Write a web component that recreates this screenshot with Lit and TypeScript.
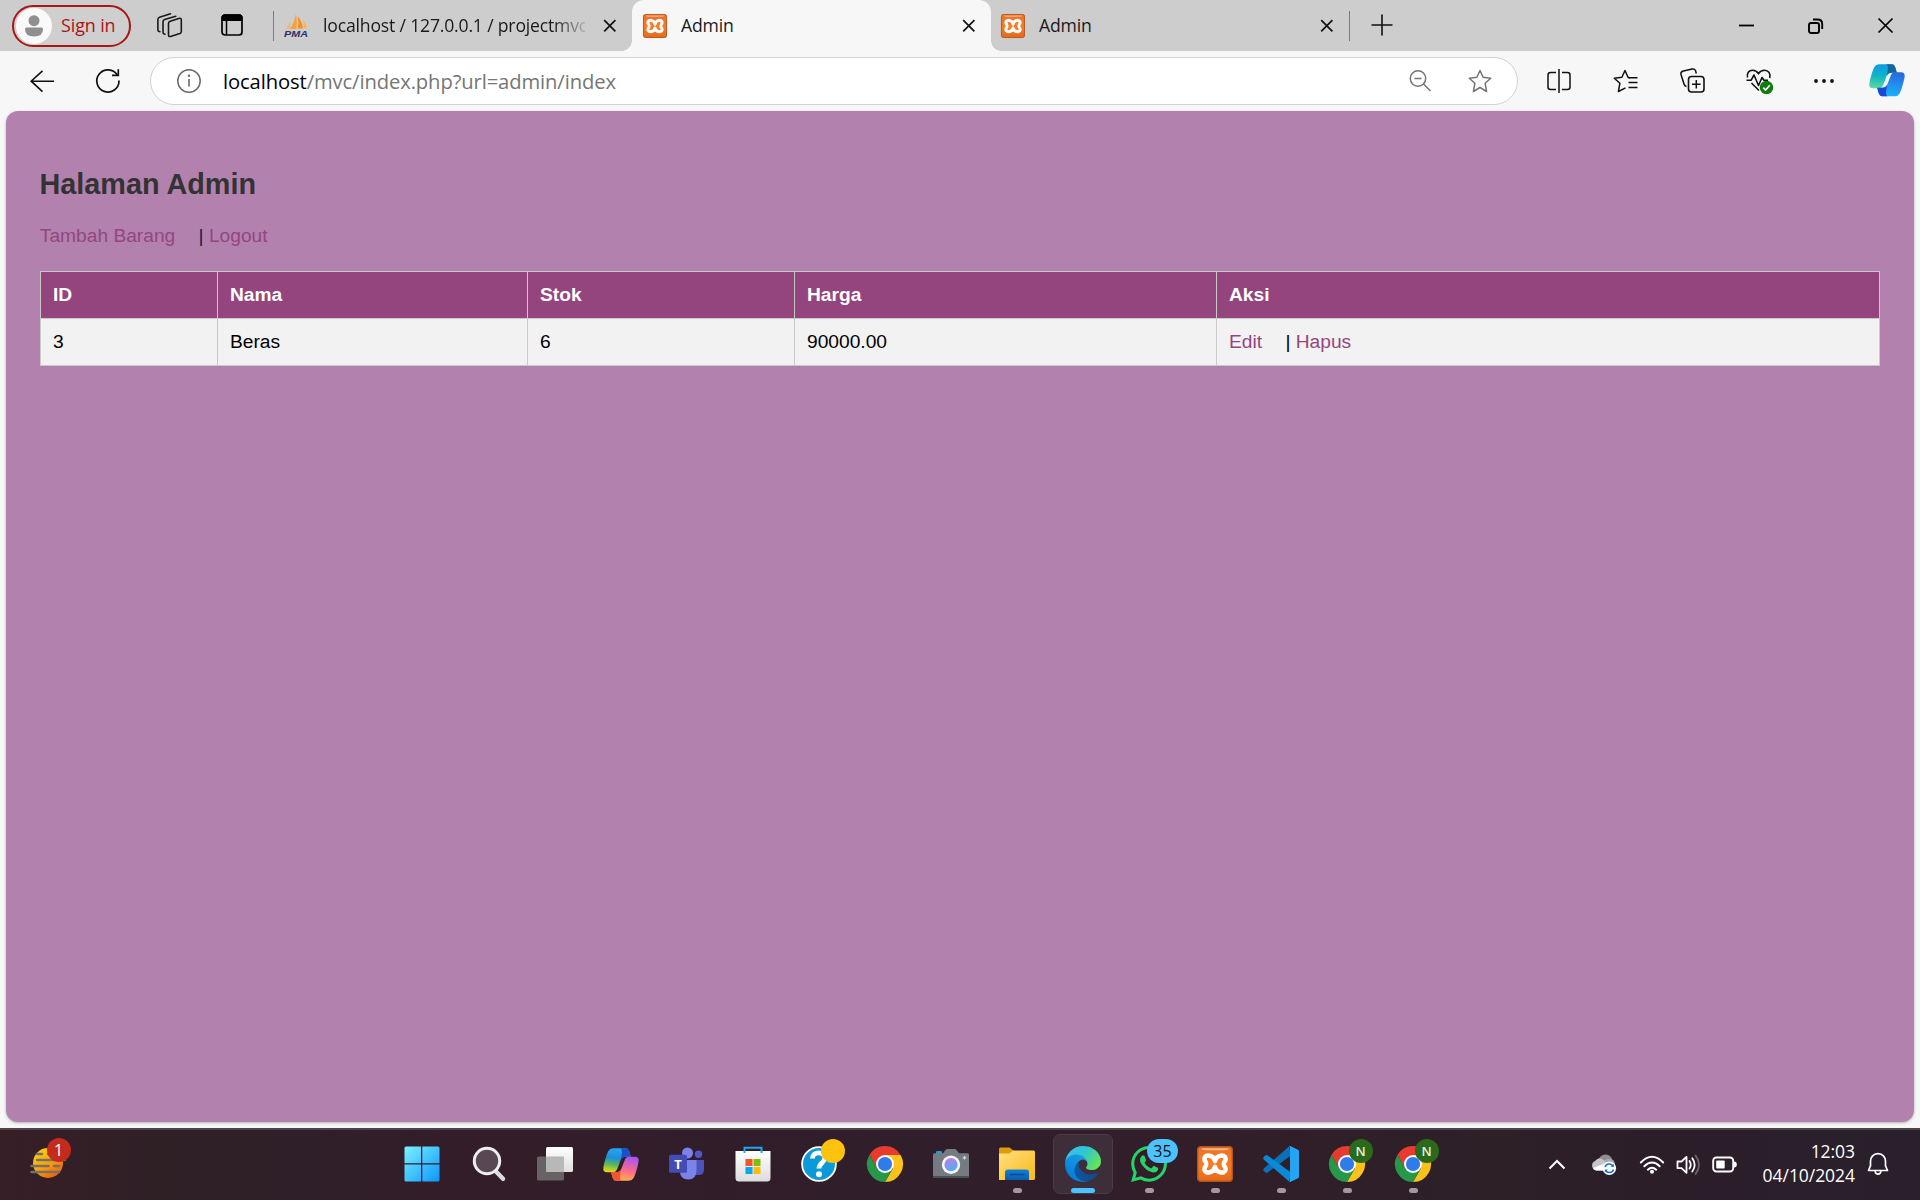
import { LitElement, html, css, svg } from "lit";
import { customElement } from "lit/decorators.js";

const icon = (w: number, h: number, body: unknown, cls = "") =>
  html`<svg class="icon ${cls}" width=${w} height=${h} viewBox="0 0 ${w} ${h}" fill="none">${body}</svg>`;

const closeX = icon(14, 14, svg`<path d="M1.2 1.2l11.2 11.2M12.4 1.2L1.2 12.4" stroke="#111" stroke-width="1.7"/>`);

const xamppArt = svg`
  <defs><linearGradient id="xg" x1="0" y1="0" x2="0" y2="1"><stop offset="0" stop-color="#e8732a"/><stop offset=".55" stop-color="#fb7a24"/><stop offset="1" stop-color="#e26a1c"/></linearGradient></defs>
  <rect x=".7" y=".7" width="34.6" height="34.6" rx="3" fill="url(#xg)" stroke="#b4561c" stroke-width="1.4"/>
  <path d="M4 2.2H32Q31 4.3 28 4.3H8Q5 4.3 4 2.2Z" fill="#f6b48a"/>
  <path d="M18 15.2C17 9 8.2 7.6 7.4 12.4C7 15.4 9.6 16 9.6 18C9.6 20 7 20.6 7.4 23.6C8.2 28.4 17 27 18 20.9C19 27 27.800 28.400 28.600 23.600C29 20.600 26.400 20 26.400 18C26.400 16 29 15.400 28.600 12.400C27.800 7.600 19 9 18 15.200Z" stroke="#fff" stroke-width="4.600" stroke-linejoin="round"/>
  <path d="M12.500 13.500V22.500M23.500 13.500V22.500" stroke="#fb7a24" stroke-width="2.200"/>`;
const xampp = (s: number) => html`<svg class="icon" width=${s} height=${s} viewBox="0 0 36 36" fill="none">${xamppArt}</svg>`;

const pma = html`<svg class="icon" width="26" height="26" viewBox="0 0 26 26">
  <path d="M13 1Q14.500 9 13.500 16H7Q11.500 9 13 1Z" fill="#f8a33a"/>
  <path d="M14.500 3Q19.500 9 20 15.500H15Q16 9 14.500 3Z" fill="#f68f1e"/>
  <path d="M19.500 6.500Q23.500 11 24 15H20.800Q20.800 10 19.500 6.500Z" fill="#fbb45c"/>
  <path d="M7 7Q7 12 2.500 16H6.500Q8 11 7 7Z" fill="#fbb45c"/>
  <text x="13" y="24.300" text-anchor="middle" textLength="24" lengthAdjust="spacingAndGlyphs" class="pma">PMA</text>
</svg>`;

const workspaces = icon(26, 26, svg`<g stroke="#1a1a1a" stroke-width="1.6" stroke-linejoin="round" stroke-linecap="round">
  <path d="M13.200 9.300L22.600 6.300Q24.300 6 24.300 7.800V19.500Q24.300 21 22.900 21.500L13.500 24.500Q11.500 24.900 11.500 23V11.500Q11.500 9.800 13.200 9.300Z"/>
  <path d="M18.800 4.200L7.600 7.600Q6 8.200 6 9.800V20.500Q6 22 8 22.200"/>
  <path d="M13.500 1.800L2.500 5.200Q.9 5.800 .9 7.400V18Q.9 19.500 2.900 19.700"/></g>`);
const tabActions = icon(24, 24, svg`<rect x="2" y="3" width="20" height="20" rx="3" stroke="#000" stroke-width="1.700"/><path d="M1.500 9V5.700Q1.500 2.200 5 2.200H19Q22.500 2.200 22.500 5.700V9Z" fill="#000"/><path d="M6.500 9V22.700" stroke="#000" stroke-width="1.500"/>`);

const STAR = "M12 1.500L15.100 8.300L22.700 9.200L17.100 14.200L18.600 22.500L12 18.500L5.400 22.500L6.900 14.200L1.300 9.200L8.900 8.300Z";
const back = icon(26, 24, svg`<path d="M13.500 1.800L2.200 12.200L13.500 22.600M2.500 12.200H25" stroke="#111" stroke-width="1.600"/>`);
const reload = icon(26, 26, svg`<path d="M24 13A11.100 11.100 0 1 1 22.300 7" stroke="#111" stroke-width="1.700" stroke-linecap="round"/><path d="M23.300 1.200V7.400H17" stroke="#111" stroke-width="1.700"/>`);
const info = icon(24, 24, svg`<circle cx="12" cy="12" r="11.200" stroke="#6a6a6a" stroke-width="1.500"/><path d="M12 10V17.500" stroke="#6a6a6a" stroke-width="1.600"/><circle cx="12" cy="6.800" r="1.200" fill="#6a6a6a"/>`);
const zoomOut = icon(24, 24, svg`<circle cx="10" cy="9.500" r="7.700" stroke="#757575" stroke-width="1.500"/><path d="M6.500 9.500H13.500M15.500 15L22.500 22" stroke="#757575" stroke-width="1.500"/>`);
const star = icon(24, 24, svg`<path d="${STAR}" stroke="#757575" stroke-width="1.500" stroke-linejoin="round"/>`);
const split = icon(24, 24, svg`<path d="M9 3.500H3.500Q1 3.500 1 6V18Q1 20.500 3.500 20.500H9M15 3.500H20.500Q23 3.500 23 6V18Q23 20.500 20.500 20.500H15M12 0V24" stroke="#111" stroke-width="1.500"/>`);
const favs = icon(25, 24, svg`<path d="M17 9L15 8.300L12 1.500L8.900 8.300L1.300 9.200L6.900 14.200L5.400 22.500L12.500 18.800" stroke="#111" stroke-width="1.500" stroke-linejoin="round"/><path d="M15.500 8.800H24.500M15.500 13.600H24.500M15.500 18.400H24.500" stroke="#111" stroke-width="1.500"/>`);
const collections = icon(25, 25, svg`<rect x="8.500" y="8.500" width="15.500" height="15.500" rx="3" stroke="#111" stroke-width="1.600"/><path d="M16.300 12V20.500M12 16.300H20.600" stroke="#111" stroke-width="1.500"/><path d="M6.500 18.500Q4.500 18 4 16L1 6.500Q.5 4.200 2.500 3.300L12 1Q14.500 .5 15.500 2.500L16.300 5.500" stroke="#111" stroke-width="1.500"/>`);
const heart = icon(28, 26, svg`<path d="M1.500 9.500C.5 5 3 2.200 6.500 2.200C9.500 2.200 11.500 4 12.500 5.500C13.500 4 15.500 2.200 18.500 2.200C22.500 2.200 24.800 5.500 23.700 10M5.500 15L13 22.500" stroke="#111" stroke-width="1.600"/><path d="M.5 12.300H5L8 7L12.500 17.500L16 9.500L18 12.300H22" stroke="#111" stroke-width="1.600" stroke-linejoin="round"/><circle cx="20.500" cy="19.500" r="6.700" fill="#107c10"/><path d="M17.300 19.600L19.600 22L23.800 17.300" stroke="#fff" stroke-width="1.700"/>`, "health");
const dots = icon(22, 6, svg`<circle cx="3" cy="3" r="1.900" fill="#111"/><circle cx="11" cy="3" r="1.900" fill="#111"/><circle cx="19" cy="3" r="1.900" fill="#111"/>`);

/* Two interlocking ribbons; the second is the first turned by half a circle. */
const RIBBON = "M10 .3H23C25.500 .5 26.500 3 27.800 8.800H22.500C18.500 8.800 17.600 12 16.500 15.200L14 21.500C13 23.700 11.500 24.200 9.500 24.200H4Q-.3 24.200 .4 19.500C1.300 14 3.500 7 5.200 3.300Q7 .3 10 .3Z";
const CURL = "M17.500 .3H23C25.500 .5 26.500 3 27.800 8.800H22.500C20 8.800 19 10 18 11.800C18.500 7 20 2 17.500 .3Z";
const copilotEdge = html`<svg class="icon" width="36" height="33" viewBox="0 0 36 33">
  <defs>
    <linearGradient id="ca" x1=".3" y1="0" x2=".2" y2="1"><stop offset="0" stop-color="#0f9be4"/><stop offset=".5" stop-color="#12b5c5"/><stop offset="1" stop-color="#57dc9a"/></linearGradient>
    <linearGradient id="cb" x1=".6" y1="0" x2=".4" y2="1"><stop offset="0" stop-color="#18b5fa"/><stop offset="1" stop-color="#2a68dd"/></linearGradient>
  </defs>
  <path d="${RIBBON}" fill="url(#ca)"/><path d="${CURL}" fill="#14679c"/>
  <g transform="rotate(180 18 16.250)"><path d="${RIBBON}" fill="url(#cb)"/><path d="${CURL}" fill="#1a47d6"/></g></svg>`;
const copilotColor = html`<svg class="icon" width="36" height="33" viewBox="0 0 36 33">
  <defs>
    <linearGradient id="cc" x1=".4" y1="0" x2=".25" y2="1"><stop offset="0" stop-color="#21a7f5"/><stop offset=".4" stop-color="#1f8fd8"/><stop offset=".68" stop-color="#5cb85c"/><stop offset="1" stop-color="#f2d60e"/></linearGradient>
    <linearGradient id="cd" x1=".6" y1="0" x2=".4" y2="1"><stop offset="0" stop-color="#ffb04e"/><stop offset=".45" stop-color="#fb6a8c"/><stop offset="1" stop-color="#a357f0"/></linearGradient>
  </defs>
  <path d="${RIBBON}" fill="url(#cc)"/><path d="${CURL}" fill="#1b50c8"/>
  <g transform="rotate(180 18 16.500)"><path d="${RIBBON}" fill="url(#cd)"/><path d="${CURL}" fill="#f4552e"/></g></svg>`;

const weather = html`<svg class="icon" width="38" height="32" viewBox="0 0 38 32">
  <defs><linearGradient id="sun" x1=".1" y1="0" x2=".8" y2="1"><stop offset="0" stop-color="#ffd60a"/><stop offset=".5" stop-color="#fba70c"/><stop offset="1" stop-color="#ea5a0c"/></linearGradient></defs>
  <circle cx="18" cy="16" r="15" fill="url(#sun)"/>
  <path d="M7 7H12M18 7H24M7 13H35M1.500 19H18.500M24 19H29M1.500 25H29" stroke="#76706a" stroke-width="2.600" stroke-linecap="round"/></svg>`;
const windows = html`<svg class="icon start" width="36" height="36" viewBox="0 0 36 36">
  <defs><linearGradient id="win" gradientUnits="userSpaceOnUse" x1="0" y1="0" x2="36" y2="36"><stop offset="0" stop-color="#7df2ff"/><stop offset="1" stop-color="#0a95ff"/></linearGradient></defs>
  <path d="M2 .5H17V17.200H.5V2Q.5 .5 2 .5ZM18.300 .5H34Q35.500 .5 35.500 2V17.200H18.300ZM.5 18.500H17V35.500H2Q.5 35.500 .5 34ZM18.300 18.500H35.500V34Q35.500 35.500 34 35.500H18.300Z" fill="url(#win)"/></svg>`;
const search = icon(34, 36, svg`<path d="M23.500 25L31 32.800" stroke="#dcdcdf" stroke-width="4.400" stroke-linecap="round"/><circle cx="15" cy="15" r="12.700" fill="#594754" stroke="#eeeef0" stroke-width="3"/>`);
const taskView = html`<svg class="icon" width="36" height="34" viewBox="0 0 36 34">
  <defs><linearGradient id="tv" x1="0" y1="0" x2="0" y2="1"><stop offset="0" stop-color="#fff"/><stop offset="1" stop-color="#dedede"/></linearGradient></defs>
  <rect x="0" y="9.500" width="27" height="24" rx="1.500" fill="#656364"/>
  <rect x="9" y="0" width="27" height="25" rx="1.500" fill="url(#tv)"/>
  <rect x="9" y="9.500" width="18" height="15.500" fill="#b9b8b8"/></svg>`;
const teams = html`<svg class="icon" width="36" height="34" viewBox="0 0 36 34">
  <circle cx="29.500" cy="7.200" r="3.700" fill="#5059c9"/><path d="M25 13H35V22.500Q35 28 29.500 28H25Z" fill="#4b53bc"/>
  <circle cx="18.500" cy="6" r="5.500" fill="#7b83eb"/><path d="M11 13H27.500V23.500Q27.500 32.500 19.200 32.500T11 24Z" fill="#7b83eb"/>
  <rect x="0" y="7.800" width="18" height="18" rx="1.600" fill="#444bb4"/>
  <text x="9" y="21.600" text-anchor="middle" class="tlet">T</text></svg>`;
const store = html`<svg class="icon" width="36" height="36" viewBox="0 0 36 36">
  <defs><linearGradient id="st" x1="0" y1="0" x2="0" y2="1"><stop offset="0" stop-color="#fff"/><stop offset="1" stop-color="#dcdcdc"/></linearGradient></defs>
  <path d="M.5 5H35.500V32Q35.500 35.500 32 35.500H4Q.5 35.500 .5 32Z" fill="url(#st)"/>
  <path d="M9.500 7V1.800H26.500V7" fill="none" stroke="#1fa8ec" stroke-width="2"/>
  <path d="M10.500 13H17.500V20H10.500Z" fill="#f35325"/><path d="M18.500 13H25.500V20H18.500Z" fill="#81bc06"/><path d="M10.500 21H17.500V28H10.500Z" fill="#05a6f0"/><path d="M18.500 21H25.500V28H18.500Z" fill="#ffba08"/></svg>`;
const help = html`<svg class="icon" width="36" height="36" viewBox="0 0 36 36" fill="none">
  <circle cx="18" cy="18" r="16.900" fill="#0a9ad9" stroke="#fff" stroke-width="1.800"/>
  <path d="M11.500 12.500C11.500 4.800 24 5.300 23.800 12.200C23.700 16.800 18 17 18 22.600" stroke="#fff" stroke-width="4.800"/><circle cx="18" cy="28.300" r="3" fill="#fff"/></svg>`;
const chrome = html`<svg class="icon" width="36" height="36" viewBox="0 0 36 36">
  <path d="M2.410 9A18 18 0 0 1 33.590 9H18L10.200 22.500Z" fill="#e63b2e"/>
  <path d="M33.590 9A18 18 0 0 1 18 36L25.800 22.500L18 9Z" fill="#fcc21b"/>
  <path d="M2.410 9A18 18 0 0 0 18 36L25.800 22.500H10.200Z" fill="#279847"/>
  <circle cx="18" cy="18" r="9" fill="#fff"/><circle cx="18" cy="18" r="7.100" fill="#2f7bea"/></svg>`;
const camera = html`<svg class="icon" width="36" height="30" viewBox="0 0 36 30">
  <defs><linearGradient id="lens" x1=".3" y1="0" x2=".7" y2="1"><stop offset="0" stop-color="#c07ce6"/><stop offset="1" stop-color="#42b4f2"/></linearGradient></defs>
  <path d="M3 5V3.200Q3 2 4.200 2H7.800Q9 2 9 3.200V5Z" fill="#1b9de8"/>
  <path d="M1.500 4.300H10L12.500 1Q13.200 0 14.500 0H21.500Q22.800 0 23.500 1L26 4.300H34.500Q36 4.300 36 5.800V27.500Q36 29 34.500 29H1.500Q0 29 0 27.500V5.800Q0 4.300 1.500 4.300Z" fill="#757b82"/>
  <path d="M0 27H36V27.500Q36 29 34.500 29H1.500Q0 29 0 27.500Z" fill="#4c5156"/>
  <circle cx="18" cy="15.700" r="9.200" fill="#f6f4f8"/><circle cx="18" cy="15.700" r="6.600" fill="url(#lens)"/>
  <path d="M31.500 7V10.600M29.700 8.800H33.300" stroke="#d5dade" stroke-width="1.200"/></svg>`;
const explorer = html`<svg class="icon" width="36" height="34" viewBox="0 0 36 34">
  <defs><linearGradient id="fold" x1="0" y1="0" x2="1" y2="1"><stop offset="0" stop-color="#ffe083"/><stop offset="1" stop-color="#fbb914"/></linearGradient>
  <linearGradient id="tray" x1="0" y1="0" x2="0" y2="1"><stop offset="0" stop-color="#1380d8"/><stop offset="1" stop-color="#0a5cae"/></linearGradient></defs>
  <path d="M0 7V2Q0 .5 1.500 .5H10.500L15 4V8H0Z" fill="#e09c08"/>
  <path d="M0 6.500H10.500L14 3.500H34.500Q36 3.500 36 5V31.500Q36 33 34.500 33H0Z" fill="url(#fold)"/>
  <path d="M6 33V25.500Q6 22.500 9 22.500H27Q30 22.500 30 25.500V33Z" fill="url(#tray)"/><path d="M10.500 27.500H25.500" stroke="#0c4a8c" stroke-width="1.600"/></svg>`;
const edge = html`<svg class="icon" width="36" height="36" viewBox="0 0 256 256">
  <defs><linearGradient id="e1" x1="0" y1=".3" x2="1" y2=".6"><stop offset="0" stop-color="#0c59a4"/><stop offset="1" stop-color="#114a8b"/></linearGradient>
  <linearGradient id="e2" x1=".8" y1="0" x2=".2" y2="1"><stop offset="0" stop-color="#1b9de2"/><stop offset=".3" stop-color="#1595df"/><stop offset="1" stop-color="#0078d7"/></linearGradient>
  <linearGradient id="e3" x1="0" y1=".2" x2="1" y2=".7"><stop offset="0" stop-color="#35c1f1"/><stop offset=".45" stop-color="#2ec6d0"/><stop offset="1" stop-color="#66e64f"/></linearGradient></defs>
  <path fill="url(#e1)" d="M231 190.500c-3.400 1.800-6.900 3.400-10.500 4.700a101.900 101.900 0 0 1-35.900 6.500c-47.300 0-88.500-32.500-88.500-74.300a31.500 31.500 0 0 1 16.400-27.300c-42.800 1.800-53.800 46.400-53.800 72.500 0 73.900 68.100 81.400 82.800 81.400 7.900 0 19.800-2.300 27-4.600l1.300-.4a128.300 128.300 0 0 0 66.600-52.800 4 4 0 0 0-5.400-5.700z"/>
  <path fill="url(#e2)" d="M105.700 241.400a79.200 79.200 0 0 1-22.700-21.300 80.700 80.700 0 0 1 29.500-120c3.200-1.500 8.500-4.100 15.600-4a32.400 32.400 0 0 1 25.700 13 31.900 31.900 0 0 1 6.300 18.700c0-.2 24.500-79.600-80-79.600-43.900 0-80 41.600-80 78.200a130.200 130.200 0 0 0 12.100 56 128 128 0 0 0 156.400 67 75.500 75.500 0 0 1-62.800-8z"/>
  <path fill="url(#e3)" d="M152.300 148.900c-.9 1-3.400 2.500-3.400 5.600 0 2.600 1.700 5.200 4.800 7.300 14.300 10 41.400 8.600 41.500 8.600a59.600 59.600 0 0 0 30.300-8.300 61.400 61.400 0 0 0 30.400-52.900c.3-22.400-8-37.300-11.300-43.900C223.500 23.900 177.700 0 128 0A128 128 0 0 0 0 126.200c.5-36.500 36.800-66 80-66 3.500 0 23.500.3 42 10.100 16.300 8.600 24.900 18.900 30.800 29.200 6.200 10.700 7.300 24.100 7.300 29.500 0 5.300-2.700 13.300-7.800 19.900z"/></svg>`;
const whatsapp = html`<svg class="icon" width="36" height="36" viewBox="0 0 24 24"><path fill="#25d366" d="M17.472 14.382c-.297-.149-1.758-.867-2.030-.967-.273-.099-.471-.148-.670.150-.197.297-.767.966-.940 1.164-.173.199-.347.223-.644.075-.297-.150-1.255-.463-2.390-1.475-.883-.788-1.480-1.761-1.653-2.059-.173-.297-.018-.458.130-.606.134-.133.298-.347.446-.520.149-.174.198-.298.298-.497.099-.198.050-.371-.025-.520-.075-.149-.669-1.612-.916-2.207-.242-.579-.487-.500-.669-.510-.173-.008-.371-.010-.570-.010-.198 0-.520.074-.792.372-.272.297-1.040 1.016-1.040 2.479 0 1.462 1.065 2.875 1.213 3.074.149.198 2.096 3.200 5.077 4.487.709.306 1.262.489 1.694.625.712.227 1.360.195 1.871.118.571-.085 1.758-.719 2.006-1.413.248-.694.248-1.289.173-1.413-.074-.124-.272-.198-.570-.347m-5.421 7.403h-.004a9.870 9.870 0 01-5.031-1.378l-.361-.214-3.741.982.998-3.648-.235-.374a9.860 9.860 0 01-1.510-5.260c.001-5.450 4.436-9.884 9.888-9.884 2.640 0 5.122 1.030 6.988 2.898a9.825 9.825 0 012.893 6.994c-.003 5.450-4.437 9.884-9.885 9.884m8.413-18.297A11.815 11.815 0 0012.050 0C5.495 0 .160 5.335.157 11.892c0 2.096.547 4.142 1.588 5.945L.057 24l6.305-1.654a11.882 11.882 0 005.683 1.448h.005c6.554 0 11.890-5.335 11.893-11.893a11.821 11.821 0 00-3.480-8.413z"/></svg>`;
const vscode = html`<svg class="icon" width="36" height="36" viewBox="0 0 36 36">
  <path d="M26 .5L.8 22.500Q-.3 23.700 .8 24.900L2.700 26.700Q3.600 27.300 4.600 26.600L28 9.500Z" fill="#0a70b8"/>
  <path d="M26 35.500L.8 13.500Q-.3 12.300 .8 11.100L2.700 9.300Q3.600 8.700 4.600 9.400L28 26.500Z" fill="#0a8ad6"/>
  <path d="M26 .3Q26.800 -.1 27.800 .3L35 3.700Q36 4.300 36 5.300V30.700Q36 31.700 35 32.300L27.800 35.700Q26.800 36.100 26 35.600Q27 35 27 33.500V2.500Q27 1 26 .3Z" fill="#24a5f3"/></svg>`;

const chevron = icon(18, 12, svg`<path d="M1.500 9.500L9 2L16.500 9.500" stroke="#fff" stroke-width="2"/>`);
const cloud = icon(26, 21, svg`<circle cx="14.500" cy="7.500" r="7" fill="#8f8c90"/><circle cx="18" cy="10.500" r="6" fill="#a9a7aa"/><path d="M5.500 16.500A5 5 0 0 1 4 7Q8 2 12.500 6L17 10.500L12 16.500Z" fill="#c6c4c7"/><path d="M2 14L15 9V16.500H6Q3 16.500 2 14Z" fill="#fff"/><circle cx="18.300" cy="14.200" r="6.800" fill="#fff"/><path d="M14 13A4.500 4.500 0 0 1 22 12M22.600 15.500A4.500 4.500 0 0 1 14.600 16.500" stroke="#1a72c9" stroke-width="1.600"/><path d="M22.800 10V13H19.800ZM13.800 18.400V15.400H16.800Z" fill="#1a72c9"/>`);
const wifi = icon(26, 20, svg`<g stroke="#fff" stroke-width="1.900" stroke-linecap="round"><path d="M1.800 7.500Q13 -4 24.200 7.500"/><path d="M5.300 11.300Q13 3.800 20.700 11.300"/><path d="M8.800 14.700Q13 10.600 17.200 14.700"/></g><circle cx="13" cy="16.800" r="2" fill="#fff"/>`);
const sound = icon(26, 22, svg`<path d="M1.500 7.500H5.500L10.500 2.800V18.800L5.500 14.200H1.500Z" stroke="#fff" stroke-width="1.800" stroke-linejoin="round"/><path d="M13.500 7Q16 10.800 13.500 14.600M16.300 4.200Q21 10.800 16.300 17.500" stroke="#fff" stroke-width="1.800" stroke-linecap="round"/><path d="M19.500 1.500Q26.500 10.800 19.500 20" stroke="#6d6369" stroke-width="1.800" stroke-linecap="round"/>`);
const battery = icon(26, 17, svg`<rect x="1.200" y="1.500" width="20" height="14" rx="3.200" stroke="#fff" stroke-width="1.900"/><rect x="4.200" y="4.500" width="8.500" height="8" rx=".8" fill="#fff"/><path d="M22 5.500Q24.800 5.500 24.800 8.500T22 11.500Z" fill="#fff"/>`);
const bell = icon(22, 24, svg`<path d="M11 .7C6 .7 3.500 4.500 3.500 8.200V12.700L1.500 17.500H20.500L18.500 12.700V8.200C18.500 4.500 16 .7 11 .7Z" stroke="#fff" stroke-width="1.700" stroke-linejoin="round"/><path d="M8 18.200Q8.500 21.200 11 21.200T14 18.200" stroke="#fff" stroke-width="1.700"/>`);

const apps = [
  { art: windows }, { art: search }, { art: taskView }, { art: copilotColor }, { art: teams }, { art: store },
  { art: help, badge: "", kind: "dot" }, { art: chrome }, { art: camera }, { art: explorer, run: true },
  { art: edge, active: true }, { art: whatsapp, run: true, badge: "35", kind: "count" }, { art: xampp(36), run: true },
  { art: vscode, run: true }, { art: chrome, run: true, badge: "N", kind: "user" }, { art: chrome, run: true, badge: "N", kind: "user" },
] as { art: unknown; badge?: string; kind?: string; run?: boolean; active?: boolean }[];

const columns = ["ID", "Nama", "Stok", "Harga", "Aksi"];
const rows = [{ id: "3", nama: "Beras", stok: "6", harga: "90000.00" }];

@customElement("app-root")
export class AppRoot extends LitElement {
  static styles = css`
    :host { display: block; width: 1920px; height: 1200px; overflow: hidden; background: #f7f7f7; font-family: "Open Sans", "Noto Sans", sans-serif; }
    * { box-sizing: border-box; }
    .icon { display: block; flex: none; overflow: visible; }
    .window { display: flex; flex-direction: column; height: 1200px; }
    .strip { display: flex; height: 51px; background: #cdcdcd; font-size: 17.600px; color: #1a1a1a; white-space: nowrap; }
    .signin { display: flex; align-items: center; gap: 9px; width: 119px; height: 42px; margin: 5px 26px 0 12px; padding-left: 2px; border: 2px solid #a81616; border-radius: 21px; color: #ab1414; background: #d0cfcf; }
    .signin .label { font-size: 17.900px; letter-spacing: -.1px; margin-top: -2px; }
    .avatar { display: flex; width: 36px; height: 36px; border-radius: 50%; background: #f9f9f9; align-items: center; justify-content: center; }
    .strip > .icon { margin-top: 12px; }
    .gap-l { margin-left: 37px; }
    .sep { width: 1px; height: 30px; margin-top: 11px; background: #7d7d7d; flex: none; }
    .sep.first { margin-left: 29px; }
    .tab { display: flex; align-items: center; height: 51px; padding-right: 15px; }
    .tab .title { flex: 1; overflow: hidden; margin-left: 14px; letter-spacing: -.18px; margin-right: 18px; margin-top: -1px; }
    .tab.one { width: 358px; padding-left: 9px; border-bottom-right-radius: 10px; }
    .tab.one .title { margin-left: 14px; margin-right: 18px; -webkit-mask-image: linear-gradient(90deg, #000 88%, transparent 102%); mask-image: linear-gradient(90deg, #000 88%, transparent 102%); }
    .tab.two { position: relative; width: 359px; padding-left: 11px; background: #f7f7f7; border-radius: 12px 12px 0 0; }
    .tab.two::before, .tab.two::after { content: ""; position: absolute; bottom: 0; width: 10px; height: 10px; }
    .tab.two::before { left: -10px; background: radial-gradient(circle at 0 0, transparent 9.500px, #f7f7f7 10px); }
    .tab.two::after { right: -10px; background: radial-gradient(circle at 100% 0, transparent 9.500px, #f7f7f7 10px); }
    .tab.three { width: 358px; padding-left: 10px; }
    .plus { margin-left: 21px; }
    .caption { display: flex; align-items: center; gap: 54px; margin-left: auto; padding-right: 27px; }
    .toolbar { display: flex; align-items: center; height: 60px; padding-bottom: 1px; }
    .nav { display: flex; gap: 40px; padding-left: 29px; width: 150px; align-items: center; }
    .address { display: flex; align-items: center; width: 1368px; height: 48px; padding: 0 25px 0 26px; border: 1.500px solid #d2d2d2; border-radius: 24px; background: #fff; }
    .url { flex: 1; margin-left: 22px; font-size: 20.200px; letter-spacing: -.1px; color: #757575; }
    .url b { font-weight: 400; color: #000; }
    .address .star { margin-left: 36px; display: flex; }
    .tools { display: flex; align-items: center; padding-left: 29px; }
    .tools .icon + .icon { margin-left: 42px; }
    .tools .icon + .icon.health { margin-left: 41px; }
    .tools .icon.health + .icon { margin-left: 39px; }
    .tools .icon + .icon:last-child { margin-left: 34px; }
    .viewport { height: 1011px; margin: 0 6px; padding: 57px 35px 0 34px; background: #b381ae; border-radius: 12px; box-shadow: 0 1px 3px rgba(0, 0, 0, .28); font: 19.200px/22px "Liberation Sans", Arial, sans-serif; color: #000; }
    h2 { margin: 0 0 24px -.5px; font-size: 28.800px; line-height: 33px; color: #333; }
    .links { margin: 0 0 24px -.2px; color: #0d1f4a; }
    a { color: #94467f; text-decoration: none; margin-right: 18px; }
    table { width: 1840px; border-collapse: collapse; table-layout: fixed; }
    th, td { border: 1px solid #c9c9c9; padding: 12px; text-align: left; height: 47px; }
    th { background: #94457e; color: #fff; }
    td { background: #f2f2f2; }
    .c0 { width: 177px; } .c1 { width: 310px; } .c2 { width: 267px; } .c3 { width: 422px; }
    .taskbar { display: flex; height: 72px; margin-top: auto; border-top: 2px solid #4d444a; background: linear-gradient(90deg, #371e27 0, #2f2026 8%, #2f1f28 16%, #331d29 24%, #301e2b 50%, #311e29 62%, #2d2027 78%, #2c1e29 88%, #29202d 100%); color: #fff; }
    .widget { position: relative; margin: 17px 0 0 30px; width: 363px; }
    .badge { position: absolute; display: flex; align-items: center; justify-content: center; height: 24px; border-radius: 12px; }
    .widget .badge { left: 16.500px; top: -9px; width: 24px; background: #c42b1c; font-size: 16px; }
    .apps { display: flex; gap: 6px; padding-top: 4px; }
    .app { position: relative; display: flex; align-items: center; justify-content: center; width: 60px; height: 60px; border-radius: 7px; }
    .start { margin-right: 3px; }
    .app.active { background: #3e2e39; border: 1px solid #4a3b45; }
    .app.run::after, .app.active::after { content: ""; position: absolute; bottom: 1px; left: 21px; width: 9px; height: 5px; margin-left: 4.500px; border-radius: 3px; background: #a09a9f; }
    .app.active::after { width: 24px; margin-left: -4px; background: #4cc2ff; bottom: 0; }
    .dot { left: 32px; top: 5px; width: 24px; background: #ffc20e; }
    .count { left: 28px; top: 5px; width: 31px; background: #4cc2ff; color: #111; font-size: 16px; }
    .user { left: 31.500px; top: 5px; width: 24px; background: #2c6a1b; color: #e4eee0; font-size: 13px; font-weight: 600; }
    .tray { display: flex; align-items: center; margin-left: auto; padding-right: 31px; padding-bottom: 1px; }
    .clock { width: 106px; margin-left: 11px; margin-right: 12px; margin-top: -4px; text-align: right; font-size: 17.500px; line-height: 24px; letter-spacing: -.05px; }
    .pma { font: italic 700 9.500px "Liberation Sans", sans-serif; fill: #2e2f6e; }
    .tlet { font: 700 13px "Open Sans", sans-serif; fill: #fff; }
  `;

  private strip() {
    return html`<div class="strip">
      <div class="signin"><span class="avatar">${icon(18, 22, svg`<circle cx="9" cy="5.700" r="5.500" fill="#8f8f8f"/><path d="M1.500 12.500H16.500Q18 12.500 18 14Q18 21.500 9 21.500T0 14Q0 12.500 1.500 12.500Z" fill="#8f8f8f"/>`)}</span><span class="label">Sign in</span></div>
      ${workspaces}<span class="gap-l"></span>${tabActions}
      <span class="sep first"></span>
      <div class="tab one">${pma}<span class="title">localhost / 127.0.0.1 / projectmvc</span>${closeX}</div>
      <div class="tab two">${xampp(24)}<span class="title">Admin</span>${closeX}</div>
      <div class="tab three">${xampp(24)}<span class="title">Admin</span>${closeX}</div>
      <span class="sep"></span><span class="plus"></span>
      ${icon(22, 26, svg`<path d="M11 2.500V23.500M.5 13H21.500" stroke="#111" stroke-width="1.600"/>`)}
      <div class="caption">
        ${icon(15, 16, svg`<path d="M0 7.500H15" stroke="#000" stroke-width="1.800"/>`)}
        ${icon(16, 16, svg`<rect x="1" y="5" width="10" height="10" rx="2" stroke="#000" stroke-width="1.900"/><path d="M5 1.500H9.500Q14.200 1.500 14.200 6V11" stroke="#000" stroke-width="1.900"/>`)}
        ${icon(15, 15, svg`<path d="M.5 .5L14.500 14.500M14.500 .5L.5 14.500" stroke="#000" stroke-width="1.700"/>`)}
      </div>
    </div>`;
  }

  private toolbar() {
    return html`<div class="toolbar">
      <div class="nav">${back}${reload}</div>
      <div class="address">${info}<span class="url"><b>localhost</b>/mvc/index.php?url=admin/index</span>${zoomOut}<span class="star">${star}</span></div>
      <div class="tools">${split}${favs}${collections}${heart}${dots}${copilotEdge}</div>
    </div>`;
  }

  private page() {
    return html`<main class="viewport">
      <h2>Halaman Admin</h2>
      <div class="links"><a>Tambah Barang</a> | <a>Logout</a></div>
      <table>
        <thead><tr>${columns.map((c, i) => html`<th class="c${i}">${c}</th>`)}</tr></thead>
        <tbody>${rows.map((r) => html`<tr><td>${r.id}</td><td>${r.nama}</td><td>${r.stok}</td><td>${r.harga}</td><td><a>Edit</a> | <a>Hapus</a></td></tr>`)}</tbody>
      </table>
    </main>`;
  }

  private taskbar() {
    return html`<div class="taskbar">
      <div class="widget">${weather}<span class="badge">1</span></div>
      <div class="apps">${apps.map((a) => html`<div class="app ${a.active ? "active" : ""} ${a.run ? "run" : ""}">${a.art}${a.kind ? html`<span class="badge ${a.kind}">${a.badge}</span>` : ""}</div>`)}</div>
      <div class="tray">${chevron}<span style="width:25px"></span>${cloud}<span style="width:22px"></span>${wifi}<span style="width:11px"></span>${sound}<span style="width:10px"></span>${battery}
        <div class="clock"><div>12:03</div><div>04/10/2024</div></div>${bell}</div>
    </div>`;
  }

  render() {
    return html`<div class="window">${this.strip()}${this.toolbar()}${this.page()}${this.taskbar()}</div>`;
  }
}
